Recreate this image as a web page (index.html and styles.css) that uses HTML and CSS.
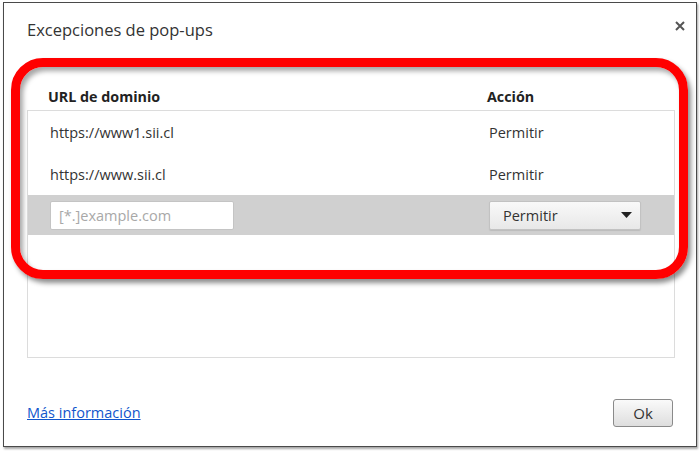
FILE: index.html
```html
<!DOCTYPE html>
<html lang="es">
<head>
  <meta charset="UTF-8">
  <title>Excepciones de pop-ups</title>
  <link rel="stylesheet" href="styles.css">
</head>
<body>
  <div class="dialog">
    <div class="titlebar">
      <h1 class="title">Excepciones de pop-ups</h1>
      <button class="close" aria-label="Cerrar">
        <svg width="10" height="10" viewBox="0 0 10 10">
          <path d="M1 1 L9 9 M9 1 L1 9" stroke="#555" stroke-width="2"/>
        </svg>
      </button>
    </div>

    <div class="columns">
      <span>URL de dominio</span>
      <span>Acción</span>
    </div>

    <div class="list">
      <div class="row">
        <span>https://www1.sii.cl</span>
        <span>Permitir</span>
      </div>
      <div class="row">
        <span>https://www.sii.cl</span>
        <span>Permitir</span>
      </div>
      <div class="row row-new">
        <input class="url-input" type="text" placeholder="[*.]example.com">
        <div class="select">
          <span>Permitir</span>
          <svg width="11" height="6" viewBox="0 0 11 6"><path d="M0 0 H11 L5.5 6 Z" fill="#222"/></svg>
        </div>
      </div>
    </div>

    <div class="footer">
      <a href="#" class="more">Más información</a>
      <button class="ok">Ok</button>
    </div>
  </div>

  <!-- anotación roja sobre la lista -->
  <div class="highlight"></div>
</body>
</html>
```

FILE: styles.css
```css
* {
  margin: 0;
  padding: 0;
  box-sizing: border-box;
}

body {
  font-family: 'Open Sans', 'Liberation Sans', sans-serif;
  font-size: 14.5px;
  color: #333;
  background: #fff;
  width: 700px;
  height: 452px;
  padding: 2px 3px 0;
}

.dialog {
  width: 694px;
  height: 445px;
  border: 1px solid #4a4a4a;
  background: #fff;
  box-shadow: 1px 2px 2px rgba(0, 0, 0, 0.35);
  padding: 0 21px 0 23px;
  display: flex;
  flex-direction: column;
}

.titlebar {
  height: 62px;
  display: flex;
  justify-content: space-between;
  align-items: flex-start;
  padding-top: 17px;
}

.title {
  font-size: 16.5px;
  font-weight: normal;
  line-height: 20px;
  color: #333;
}

.close {
  border: none;
  background: none;
  margin-top: 0;
  margin-right: -11px;
  width: 12px;
  height: 12px;
  display: flex;
  align-items: center;
  justify-content: center;
}

.columns {
  height: 45px;
  display: grid;
  grid-template-columns: 439px 1fr;
  padding: 18px 0 0 21px;
  align-items: center;
  font-weight: bold;
  color: #222;
  font-size: 14.3px;
}

.list {
  height: 248px;
  border: 1px solid #dcdcdc;
}

.row {
  height: 42px;
  display: grid;
  grid-template-columns: 439px 152px;
  padding-left: 22px;
  align-items: center;
  color: #333;
}

.row-new {
  height: 40px;
  background: #d0d0d0;
}

.url-input {
  width: 184px;
  height: 29px;
  border: 1px solid #c4c4c4;
  border-radius: 2px;
  padding: 0 8px;
  font-family: inherit;
  font-size: 14.5px;
  color: #333;
  background: #fff;
}

.url-input::placeholder {
  color: #a8a8a8;
}

.select {
  height: 29px;
  border: 1px solid #c2c2c2;
  border-radius: 2px;
  background: linear-gradient(#f9f9f9, #e8e8e8);
  display: flex;
  align-items: center;
  justify-content: space-between;
  padding: 0 8px 0 13px;
  box-shadow: 0 1px 1px rgba(0, 0, 0, 0.1);
}

.footer {
  flex: 1;
  display: flex;
  justify-content: space-between;
  align-items: center;
  padding: 24px 0 3px;
}

.more {
  color: #1155cc;
  text-decoration: underline;
}

.ok {
  width: 60px;
  height: 28px;
  margin-right: 2px;
  border: 1px solid #8a8a8a;
  border-radius: 3px;
  background: linear-gradient(#fafafa, #dedede);
  font-family: inherit;
  font-size: 15px;
  color: #333;
}

.highlight {
  position: absolute;
  left: 11px;
  top: 58px;
  width: 677px;
  height: 221px;
  border: 9px solid #ff0000;
  border-radius: 32px;
  box-shadow: 3px 4px 5px rgba(0, 0, 0, 0.45), inset 3px 4px 5px rgba(0, 0, 0, 0.35);
  pointer-events: none;
}
```
